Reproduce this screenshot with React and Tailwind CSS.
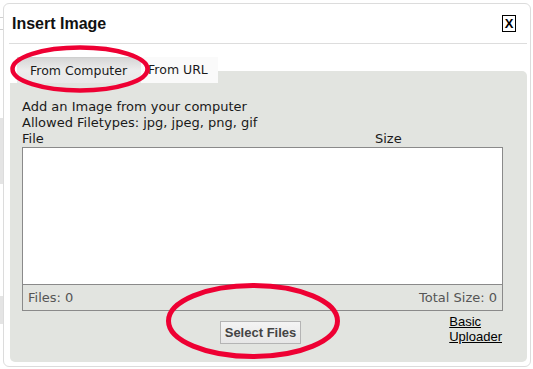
export default function App() {
  return (
    <div className="relative w-[533px] h-[369px] overflow-hidden bg-white font-['DejaVu_Sans',sans-serif] text-[13px] text-[#1a1a1a]">
      <div className="flex">
        <div className="w-[3px] h-[369px] flex flex-col">
          <div className="h-[17px]" />
          <div className="h-[1px] bg-[#cfcfcf]" />
          <div className="h-[11px]" />
          <div className="h-[1px] bg-[#cfcfcf]" />
          <div className="h-[88px]" />
          <div className="h-[66px] bg-[#e4e4e4]" />
          <div className="h-[112px]" />
          <div className="h-[28px] bg-[#e4e4e4]" />
        </div>
        <div className="mt-[3px] w-[528px] h-[364px] rounded-[6px] border border-[#dcdcdc] bg-white flex flex-col">
          <div className="ml-[5px] mr-[3px] h-[40px] border-b border-[#dddddd] flex items-center justify-between">
            <div className="pl-[3px] font-['Liberation_Sans',Arial,sans-serif] text-[16px] leading-[20px] font-bold text-[#111]">Insert Image</div>
            <div className="mr-[11px] w-[14px] h-[17px] border border-black bg-white flex items-center justify-center font-['Liberation_Sans',Arial,sans-serif] text-[13px] leading-none font-bold text-black">X</div>
          </div>
          <div className="mt-[13px] ml-[6px] mr-[3px] flex flex-col">
            <div className="relative z-10 self-start flex bg-white pl-[7px] h-[26px]">
              <div className="h-[26px] pl-[13px] pr-[14px] flex items-center text-[12.5px] leading-[26px] bg-gradient-to-b from-[#d6d6d6] via-[#ededed] to-[#e9e9e9] border-t border-[#cfcfcf]">From Computer</div>
              <div className="h-[26px] pl-[7px] pr-[10px] flex items-center text-[12.5px] leading-[26px] bg-[#fafafa]">From URL</div>
            </div>
            <div className="-mt-[12px] h-[291px] rounded-[5px] bg-[#e2e4e0] pt-[28px] pl-[12px]">
              <div className="leading-[16px]">Add an Image from your computer</div>
              <div className="leading-[16px]">Allowed Filetypes: jpg, jpeg, png, gif</div>
              <div className="w-[481px] flex leading-[16px]">
                <div className="flex-1">File</div>
                <div className="w-[128px]">Size</div>
              </div>
              <div className="w-[481px] border border-[#8a8a8a]">
                <div className="h-[137px] bg-white border-b border-[#8a8a8a]" />
                <div className="h-[25px] flex items-center justify-between pl-[5px] pr-[5px] text-[13px] text-[#555]">
                  <span>Files: 0</span>
                  <span>Total Size: 0</span>
                </div>
              </div>
              <div className="w-[481px] grid grid-cols-[1fr_auto_1fr]">
                <div />
                <div className="mt-[10px] mr-[4px] h-[23px] px-[4px] flex items-center border border-[#b4b4b4] bg-gradient-to-b from-[#f4f4f4] to-[#e6e6e6] font-['Liberation_Sans',Arial,sans-serif] text-[13px] font-bold text-[#444]">Select Files</div>
                <div className="justify-self-end mt-[3px] mr-[1px] font-['Liberation_Sans',Arial,sans-serif] text-[13px] leading-[15px] underline text-black">
                  Basic<br />Uploader
                </div>
              </div>
            </div>
          </div>
        </div>
      </div>
      <svg className="absolute left-0 top-0 z-20 pointer-events-none" width="533" height="369" viewBox="0 0 533 369">
        <ellipse cx="80" cy="69" rx="67.5" ry="21.5" fill="none" stroke="#ee0033" strokeWidth="4.5" />
        <ellipse cx="253" cy="321" rx="84.5" ry="35.5" fill="none" stroke="#ee0033" strokeWidth="5" />
      </svg>
    </div>
  );
}
